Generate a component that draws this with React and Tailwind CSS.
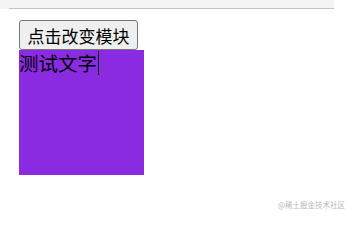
export default function App() {
  return (
    <div className="relative h-[216px] w-[352px] overflow-hidden bg-white font-['Noto_Sans_CJK_SC',sans-serif]">
      <div className="h-[9px] w-[334px] bg-[#f3f3f3] pl-[9px]">
        <div className="h-[8px]" />
        <div className="h-px bg-[#c4c4c4]" />
      </div>
      <div className="ml-[19px] mt-[11px]">
        <button
          type="button"
          className="flex h-[30px] w-[119px] items-center justify-center rounded-[3px] border border-[#767676] bg-[#efefef] text-[17px] leading-none text-black"
        >
          点击改变模块
        </button>
        <div className="h-[125px] w-[125px] bg-[#8a2be2]">
          <div className="flex items-start text-[19.5px] leading-[26px] text-black">
            <span>测试文字</span>
            <span className="ml-px mt-[1px] h-[24px] w-px bg-black" />
          </div>
        </div>
      </div>
      <div className="absolute bottom-[8px] right-[7px] text-[7.5px] leading-none text-[#b8b8b8]">
        @稀土掘金技术社区
      </div>
    </div>
  );
}
